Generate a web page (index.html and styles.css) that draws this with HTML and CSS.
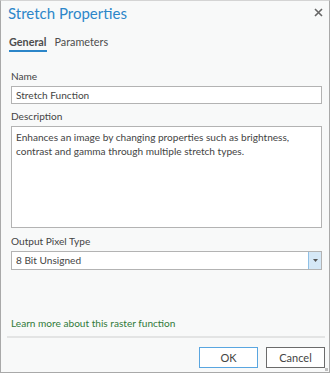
FILE: index.html
```html
<!DOCTYPE html>
<html lang="en">
<head>
    <meta charset="UTF-8">
    <title>Stretch Properties</title>
    <link rel="stylesheet" href="styles.css">
</head>
<body>
    <div class="dialog">
        <div class="title-bar">
            <h1>Stretch Properties</h1>
            <button class="close" aria-label="Close">
                <svg width="9" height="9" viewBox="0 0 9 9"><path d="M1 1L8 8M8 1L1 8" stroke="#666" stroke-width="1.6"/></svg>
            </button>
        </div>

        <div class="tabs">
            <span class="tab active">General</span>
            <span class="tab">Parameters</span>
        </div>

        <div class="content">
            <label class="field-label">Name</label>
            <div class="input">Stretch Function</div>

            <label class="field-label">Description</label>
            <div class="input textarea">Enhances an image by changing properties such as brightness, contrast and gamma through multiple stretch types.</div>

            <label class="field-label">Output Pixel Type</label>
            <div class="select">
                <span class="select-value">8 Bit Unsigned</span>
                <span class="select-btn">
                    <svg width="5" height="3" viewBox="0 0 5 3"><path d="M0 0H5L2.5 3Z" fill="#555"/></svg>
                </span>
            </div>

            <a href="#" class="learn-more">Learn more about this raster function</a>
        </div>

        <div class="footer">
            <button class="btn btn-ok">OK</button>
            <button class="btn">Cancel</button>
            <span class="grip"></span>
        </div>
    </div>
</body>
</html>
```

FILE: styles.css
```css
* {
    margin: 0;
    padding: 0;
    box-sizing: border-box;
}

body {
    font-family: Lato, "Open Sans", sans-serif;
    font-size: 10.1px;
    color: #444444;
    background: #ffffff;
}

.dialog {
    position: relative;
    width: 330px;
    height: 373px;
    background: #f8f9f9;
    border: 1px solid #a9a9a9;
    border-top-color: #d4d4d4;
    display: flex;
    flex-direction: column;
}

.title-bar {
    display: flex;
    justify-content: space-between;
    align-items: center;
    padding: 0 4px 0 7px;
    height: 23px;
}

.title-bar h1 {
    font-size: 15px;
    font-weight: normal;
    color: #2c86c9;
}

.close {
    background: none;
    border: none;
    width: 14px;
    height: 14px;
    display: flex;
    align-items: center;
    justify-content: center;
    margin-bottom: 1px;
}

.tabs {
    display: flex;
    gap: 8px;
    padding: 11px 0 0 8px;
}

.tab {
    font-size: 10.8px;
    color: #4d4d4d;
    padding-bottom: 2px;
    border-bottom: 2px solid transparent;
}

.tab.active {
    font-weight: bold;
    border-bottom-color: #2c86c9;
}

.content {
    flex: 1;
    display: flex;
    flex-direction: column;
    padding: 16px 7px 0 10px;
}

.field-label {
    display: block;
    height: 16px;
    line-height: 16px;
    margin-bottom: 2px;
}

.input {
    background: #ffffff;
    border: 1px solid #b3b3b3;
    height: 18px;
    line-height: 16px;
    padding: 0 4px;
    margin-bottom: 4px;
}

.textarea {
    height: 102px;
    line-height: 14px;
    padding: 3px 4px;
    margin-bottom: 5px;
}

.select {
    display: flex;
    height: 19px;
    background: #ffffff;
    border: 1px solid #b3b3b3;
}

.select-value {
    flex: 1;
    line-height: 17px;
    padding: 0 4px;
}

.select-btn {
    width: 13px;
    background: #d5e8f7;
    border-left: 1px solid #8fc0e6;
    display: flex;
    align-items: center;
    justify-content: center;
}

.learn-more {
    margin-top: auto;
    margin-bottom: 7px;
    color: #317a3a;
    text-decoration: none;
}

.footer {
    display: flex;
    justify-content: flex-end;
    gap: 8px;
    margin: 0 4px 0 6px;
    padding: 9px 0 4px 0;
    border-top: 2px solid #e3e4e4;
}

.btn {
    font-family: inherit;
    font-size: 11px;
    color: #444444;
    width: 59px;
    height: 21px;
    background: #ffffff;
    border: 1px solid #6b6b6b;
}

.btn-ok {
    border-color: #5aa6e0;
}

.grip {
    position: absolute;
    right: 1px;
    bottom: 1px;
    width: 3px;
    height: 3px;
    background: #c0c0c0;
}
```
